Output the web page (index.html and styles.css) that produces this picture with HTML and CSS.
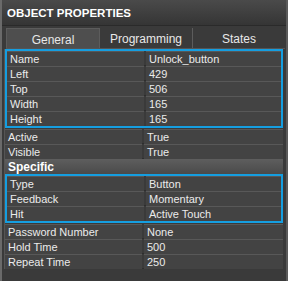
FILE: index.html
```html
<!DOCTYPE html>
<html lang="en">
<head>
  <meta charset="UTF-8">
  <title>Object Properties</title>
  <link rel="stylesheet" href="styles.css">
</head>
<body>
  <div class="panel">
    <div class="title">OBJECT PROPERTIES</div>
    <div class="tabs">
      <div class="tab active">General</div>
      <div class="tab">Programming</div>
      <div class="tab">States</div>
    </div>
    <div class="props">
      <div class="group">
        <div class="row"><span>Name</span><span>Unlock_button</span></div>
        <div class="row"><span>Left</span><span>429</span></div>
        <div class="row"><span>Top</span><span>506</span></div>
        <div class="row"><span>Width</span><span>165</span></div>
        <div class="row"><span>Height</span><span>165</span></div>
      </div>
      <div class="row"><span>Active</span><span>True</span></div>
      <div class="row"><span>Visible</span><span>True</span></div>
      <div class="section">Specific</div>
      <div class="group">
        <div class="row"><span>Type</span><span>Button</span></div>
        <div class="row"><span>Feedback</span><span>Momentary</span></div>
        <div class="row"><span>Hit</span><span>Active Touch</span></div>
      </div>
      <div class="row"><span>Password Number</span><span>None</span></div>
      <div class="row"><span>Hold Time</span><span>500</span></div>
      <div class="row"><span>Repeat Time</span><span>250</span></div>
    </div>
  </div>
</body>
</html>
```

FILE: styles.css
```css
* {
  box-sizing: border-box;
  margin: 0;
  padding: 0;
}
body {
  background: #2e2e2e;
  font-family: 'Liberation Sans', Arial, sans-serif;
  font-size: 11px;
  color: #ebebeb;
}
.panel {
  width: 288px;
  height: 281px;
  background: #3a3a3a;
  border-left: 2px solid #6a6a6a;
  border-right: 2px solid #5a5a5a;
  overflow: hidden;
}
.title {
  height: 26px;
  padding: 7px 0 0 5px;
  font-weight: 700;
  font-size: 11.5px;
  color: #ffffff;
  background: linear-gradient(to bottom, #4a4a4a, #353535);
  border-bottom: 1px solid #2a2a2a;
}
.tabs {
  display: flex;
  margin: 2px 1px 0 4px;
  height: 21px;
  border-bottom: 1px solid #555;
}
.tab {
  flex: 1;
  display: flex;
  align-items: center;
  justify-content: center;
  padding-top: 2px;
  font-size: 12px;
  color: #e8e8e8;
}
.tab + .tab + .tab {
  border-left: 1px solid #5c5c5c;
}
.tab.active {
  background: #4e4e4e;
  border: 1px solid #5c5c5c;
  border-bottom: none;
}
.props {
  margin: 0 1px 0 2px;
  padding-right: 2px;
  border-left: 1px solid #555;
}
.group {
  border: 2px solid #159ee0;
  margin: 0 0 1px;
}
.row {
  display: grid;
  grid-template-columns: 137px 1fr;
  height: 15px;
  border-bottom: 1px solid #2e2e2e;
}
.group .row:last-child {
  border-bottom: none;
}
.row span {
  background: #434343;
  padding: 1px 0 0 3px;
  line-height: 13px;
  border-top: 1px solid #585858;
  white-space: nowrap;
}
.row span + span {
  margin-left: 2px;
}
.section {
  height: 15px;
  padding: 1px 0 0 3px;
  font-weight: 700;
  font-size: 12px;
  background: linear-gradient(to bottom, #5e5e5e, #4a4a4a);
  color: #fff;
}
```
